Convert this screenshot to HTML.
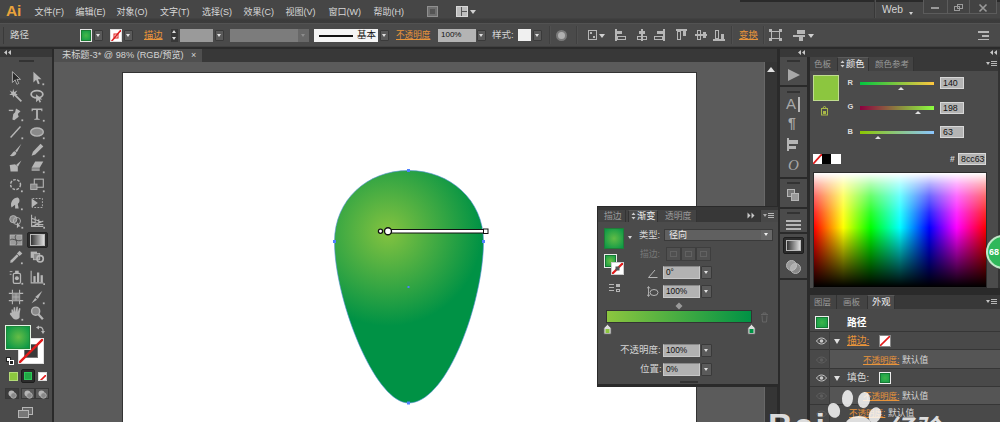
<!DOCTYPE html>
<html><head><meta charset="utf-8">
<style>
*{box-sizing:border-box;margin:0;padding:0}
html,body{width:1000px;height:422px;overflow:hidden;background:#5b5b5b;font-family:"Liberation Sans","Noto Sans CJK SC",sans-serif;font-size:10px;color:#d4d4d4}
.a{position:absolute}
.t{position:absolute;white-space:nowrap;line-height:14px;font-size:10px}
.m{font-size:9px;color:#d8d8d8}
.or{color:#e8943a;text-decoration:underline}
.dk{color:#111}
</style></head><body>
<div class="a" style="left:54px;top:62px;width:712px;height:360px;background:#5b5b5b;"></div>
<div class="a" style="left:122px;top:72px;width:575px;height:351px;background:#fff;border:1px solid #333;border-bottom:0"></div>
<svg class="a" style="left:300px;top:150px" width="220" height="272" viewBox="300 150 220 272">
<defs><radialGradient id="g" gradientUnits="userSpaceOnUse" cx="388" cy="232" r="94">
<stop offset="0" stop-color="#84c340"/><stop offset="1" stop-color="#009245"/></radialGradient></defs>
<path id="egg" d="M408.5,170.5 C367,170.5 334.5,200 334.5,241.5 C334.5,300 375,403 408.5,403 C448,403 483.5,300 483.5,241.5 C483.5,200 450,170.5 408.5,170.5 Z" fill="url(#g)" stroke="#4f8fd8" stroke-width="0.6"/>
<g fill="#4f80ff"><rect x="407" y="169" width="3" height="3"/><rect x="333" y="240" width="3" height="3"/><rect x="482" y="240" width="3" height="3"/><rect x="407" y="401.5" width="3" height="3"/><rect x="407.5" y="286" width="2" height="2"/></g>
<rect x="390" y="229.500" width="94" height="3.500" fill="#fff" stroke="#111" stroke-width="1"/>
<circle cx="380.5" cy="231.200" r="2.100" fill="#fff" stroke="#111" stroke-width="1.300"/>
<circle cx="388" cy="231.200" r="3.500" fill="#fff" stroke="#111" stroke-width="1.400"/>
<rect x="483.500" y="229" width="4.500" height="4.500" fill="#fff" stroke="#111" stroke-width="1"/>
</svg>
<div class="a" style="left:0px;top:0px;width:1000px;height:18px;background:#464646;"></div>
<div class="a" style="left:0;top:18px;width:1000px;height:5px;background:linear-gradient(180deg,#434343,#3b3b3b 40%,#3c3c3c)"></div>
<div class="a" style="left:740px;top:0px;width:260px;height:2px;background:#2a2a2a;"></div>
<div class="t " style="left:6px;top:2.5px;font-size:15.500px;line-height:16px;font-weight:bold;color:#e9a33b;letter-spacing:-0.3px">Ai</div>
<div class="t m" style="left:34.5px;top:5px;">文件(F)</div>
<div class="t m" style="left:75.5px;top:5px;">编辑(E)</div>
<div class="t m" style="left:116.5px;top:5px;">对象(O)</div>
<div class="t m" style="left:160px;top:5px;">文字(T)</div>
<div class="t m" style="left:202px;top:5px;">选择(S)</div>
<div class="t m" style="left:243.5px;top:5px;">效果(C)</div>
<div class="t m" style="left:285.5px;top:5px;">视图(V)</div>
<div class="t m" style="left:328.5px;top:5px;">窗口(W)</div>
<div class="t m" style="left:373.5px;top:5px;">帮助(H)</div>
<div class="a" style="left:427px;top:6px;width:11px;height:11px;background:#6e6e6e;border:1px solid #909090"></div>
<div class="a" style="left:430px;top:9px;width:5px;height:5px;background:#555;"></div>
<div class="a" style="left:456px;top:6px;width:12px;height:11px;background:#bdbdbd;border:1px solid #d8d8d8"></div>
<div class="a" style="left:461px;top:7px;width:1px;height:9px;background:#555;"></div>
<div class="a" style="left:462px;top:11px;width:5px;height:1px;background:#555;"></div>
<div class="a" style="left:470px;top:10px;border:3px solid transparent;border-top:4px solid #d0d0d0;border-bottom:0"></div>
<div class="a" style="left:874px;top:0px;width:1px;height:18px;background:#383838;"></div>
<div class="a" style="left:875px;top:0px;width:1px;height:18px;background:#505050;"></div>
<div class="t " style="left:882px;top:3px;font-size:10.300px">Web</div>
<div class="a" style="left:909px;top:12px;border:2.5px solid transparent;border-top:3px solid #d0d0d0;border-bottom:0"></div>
<div class="a" style="left:923px;top:0px;width:24.5px;height:13.5px;background:#434343;border:1px solid #5c5c5c;border-top:0"></div>
<div class="a" style="left:947px;top:0px;width:22.5px;height:13.5px;background:#434343;border:1px solid #5c5c5c;border-top:0"></div>
<div class="a" style="left:969px;top:0px;width:28px;height:13.5px;background:#434343;border:1px solid #5c5c5c;border-top:0"></div>
<div class="a" style="left:931px;top:7px;width:8px;height:2px;background:#9a9a9a;"></div>
<div class="a" style="left:954px;top:5.5px;width:6px;height:5px;background:transparent;border:1px solid #9a9a9a"></div>
<div class="a" style="left:957px;top:3.5px;width:6px;height:5px;background:transparent;border:1px solid #9a9a9a"></div>
<svg class="a" style="left:978px;top:2.5px;" width="10" height="10" viewBox="0 0 10 10"><path d="M1.500,1.500 L8.500,8.500 M8.500,1.500 L1.500,8.500" stroke="#9a9a9a" stroke-width="1.6"/></svg>
<div class="a" style="left:0px;top:22.5px;width:1000px;height:24px;background:#4a4a4a;border-top:1px solid #525252"></div>
<div class="a" style="left:0px;top:46px;width:1000px;height:1px;background:#404040;"></div>
<div class="a" style="left:0px;top:47px;width:1000px;height:2px;background:#2b2b2b;"></div>
<div class="a" style="left:3px;top:27px;width:1px;height:17px;background:#3a3a3a;"></div>
<div class="t " style="left:10px;top:28px;font-size:9.5px">路径</div>
<div class="a" style="left:80px;top:28.500px;width:12px;height:13px;border:1px solid #e8e8e8;box-shadow:inset 0 0 0 1px #1b7c32;background:radial-gradient(circle,#45b849,#069647)"></div>
<div class="a" style="left:94px;top:29.5px;width:9px;height:11px;background:#5a5a5a;border:1px solid #3a3a3a;border-radius:1px"></div>
<div class="a" style="left:96.0px;top:33.5px;border:2.5px solid transparent;border-top:3px solid #e0e0e0;border-bottom:0"></div>
<div class="a" style="left:110px;top:28.500px;width:12px;height:13px;background:#fff;border:1px solid #ddd;overflow:hidden"><svg width="10" height="12" viewBox="0 0 10 12"><rect x="3" y="4" width="4" height="4" fill="none" stroke="#d22" stroke-width="1"/><path d="M0,12 L10,0" stroke="#d22" stroke-width="1.5"/></svg></div>
<div class="a" style="left:124px;top:29.5px;width:9px;height:11px;background:#5a5a5a;border:1px solid #3a3a3a;border-radius:1px"></div>
<div class="a" style="left:126.0px;top:33.5px;border:2.5px solid transparent;border-top:3px solid #e0e0e0;border-bottom:0"></div>
<div class="t or" style="left:144px;top:28px;font-size:9.300px">描边</div>
<div class="a" style="left:171px;top:28.5px;width:7px;height:13px;background:#383838;"></div>
<div class="a" style="left:172px;top:30px;border:2.5px solid transparent;border-bottom:3px solid #ddd;border-top:0"></div>
<div class="a" style="left:172px;top:37px;border:2.5px solid transparent;border-top:3px solid #ddd;border-bottom:0"></div>
<div class="a" style="left:180px;top:28.5px;width:33px;height:13px;background:#9a9a9a;"></div>
<div class="a" style="left:215px;top:29.5px;width:9px;height:11px;background:#5a5a5a;border:1px solid #3a3a3a;border-radius:1px"></div>
<div class="a" style="left:217.0px;top:33.5px;border:2.5px solid transparent;border-top:3px solid #e0e0e0;border-bottom:0"></div>
<div class="a" style="left:230px;top:28.5px;width:68px;height:13px;background:#7c7c7c;"></div>
<div class="a" style="left:298px;top:28.5px;width:11px;height:13px;background:#686868;"></div>
<div class="a" style="left:301px;top:34px;border:2.5px solid transparent;border-top:3px solid #8c8c8c;border-bottom:0"></div>
<div class="a" style="left:314px;top:28.5px;width:64px;height:13px;background:#f4f4f4;"></div>
<div class="a" style="left:319px;top:35px;width:34px;height:2px;background:#111;"></div>
<div class="t dk" style="left:357px;top:28px;font-size:9.500px">基本</div>
<div class="a" style="left:380px;top:29.5px;width:9px;height:11px;background:#5a5a5a;border:1px solid #3a3a3a;border-radius:1px"></div>
<div class="a" style="left:382.0px;top:33.5px;border:2.5px solid transparent;border-top:3px solid #e0e0e0;border-bottom:0"></div>
<div class="t or" style="left:396px;top:28px;font-size:8.600px">不透明度</div>
<div class="a" style="left:438px;top:28.5px;width:38px;height:13px;background:#b4b4b4;"></div>
<div class="t dk" style="left:441px;top:28px;font-size:8px">100%</div>
<div class="a" style="left:477px;top:29.5px;width:9px;height:11px;background:#5a5a5a;border:1px solid #3a3a3a;border-radius:1px"></div>
<div class="a" style="left:479.0px;top:33.5px;border:2.5px solid transparent;border-top:3px solid #e0e0e0;border-bottom:0"></div>
<div class="t " style="left:492px;top:28px;font-size:9.500px">样式:</div>
<div class="a" style="left:518px;top:29px;width:13px;height:12px;background:#f0f0f0;"></div>
<div class="a" style="left:533px;top:29.5px;width:9px;height:11px;background:#5a5a5a;border:1px solid #3a3a3a;border-radius:1px"></div>
<div class="a" style="left:535.0px;top:33.5px;border:2.5px solid transparent;border-top:3px solid #e0e0e0;border-bottom:0"></div>
<div class="a" style="left:556px;top:30px;width:11px;height:11px;background:#b0b0b0;border-radius:50%;border:2px solid #7a7a7a"></div>
<div class="a" style="left:549px;top:26px;width:1px;height:18px;background:#404040;"></div>
<div class="a" style="left:550px;top:26px;width:1px;height:18px;background:#505050;"></div>
<div class="a" style="left:576px;top:26px;width:1px;height:18px;background:#404040;"></div>
<div class="a" style="left:577px;top:26px;width:1px;height:18px;background:#505050;"></div>
<div class="a" style="left:731px;top:26px;width:1px;height:18px;background:#404040;"></div>
<div class="a" style="left:732px;top:26px;width:1px;height:18px;background:#505050;"></div>
<div class="a" style="left:763px;top:26px;width:1px;height:18px;background:#404040;"></div>
<div class="a" style="left:764px;top:26px;width:1px;height:18px;background:#505050;"></div>
<div class="a" style="left:588px;top:30px;width:9px;height:10px;background:transparent;border:1px solid #b6b6b6"></div>
<div class="a" style="left:590px;top:32px;width:2px;height:2px;background:#b6b6b6;"></div>
<div class="a" style="left:593px;top:36px;width:2px;height:2px;background:#b6b6b6;"></div>
<div class="a" style="left:599px;top:34px;border:3px solid transparent;border-top:4px solid #d0d0d0;border-bottom:0"></div>
<div class="a" style="left:615px;top:29px;width:2px;height:12px;background:#b6b6b6;"></div>
<div class="a" style="left:617px;top:31px;width:5px;height:3px;background:#b6b6b6;"></div>
<div class="a" style="left:617px;top:36px;width:9px;height:4px;background:transparent;border:1px solid #b6b6b6"></div>
<div class="a" style="left:641px;top:29px;width:2px;height:12px;background:#b6b6b6;"></div>
<div class="a" style="left:639px;top:31px;width:6px;height:3px;background:#b6b6b6;"></div>
<div class="a" style="left:637px;top:36px;width:10px;height:4px;background:transparent;border:1px solid #b6b6b6"></div>
<div class="a" style="left:663px;top:29px;width:2px;height:12px;background:#b6b6b6;"></div>
<div class="a" style="left:657px;top:31px;width:6px;height:3px;background:#b6b6b6;"></div>
<div class="a" style="left:654px;top:36px;width:9px;height:4px;background:transparent;border:1px solid #b6b6b6"></div>
<div class="a" style="left:676px;top:29px;width:11px;height:2px;background:#b6b6b6;"></div>
<div class="a" style="left:677px;top:31px;width:4px;height:9px;background:transparent;border:1px solid #b6b6b6"></div>
<div class="a" style="left:683px;top:31px;width:3px;height:5px;background:#b6b6b6;"></div>
<div class="a" style="left:695px;top:34px;width:12px;height:2px;background:#b6b6b6;"></div>
<div class="a" style="left:697px;top:30px;width:4px;height:10px;background:transparent;border:1px solid #b6b6b6"></div>
<div class="a" style="left:703px;top:32px;width:3px;height:6px;background:#b6b6b6;"></div>
<div class="a" style="left:713px;top:39px;width:12px;height:2px;background:#b6b6b6;"></div>
<div class="a" style="left:715px;top:30px;width:4px;height:9px;background:transparent;border:1px solid #b6b6b6"></div>
<div class="a" style="left:721px;top:34px;width:3px;height:5px;background:#b6b6b6;"></div>
<div class="t or" style="left:739px;top:28px;font-size:9.5px">变换</div>
<div class="a" style="left:771px;top:31px;width:9px;height:8px;background:transparent;border:1px solid #b6b6b6"></div>
<div class="a" style="left:769px;top:29px;width:3px;height:3px;background:#b6b6b6;"></div>
<div class="a" style="left:779px;top:29px;width:3px;height:3px;background:#b6b6b6;"></div>
<div class="a" style="left:769px;top:38px;width:3px;height:3px;background:#b6b6b6;"></div>
<div class="a" style="left:779px;top:38px;width:3px;height:3px;background:#b6b6b6;"></div>
<div class="a" style="left:797px;top:30px;width:8px;height:4px;background:#b6b6b6;"></div>
<div class="a" style="left:793px;top:35px;width:12px;height:2px;background:#b6b6b6;"></div>
<div class="a" style="left:799px;top:37px;width:4px;height:4px;background:#b6b6b6;"></div>
<div class="a" style="left:808px;top:34px;border:3px solid transparent;border-top:4px solid #d0d0d0;border-bottom:0"></div>
<div class="a" style="left:978px;top:31px;width:11px;height:2px;background:#b6b6b6;"></div>
<div class="a" style="left:982px;top:35px;width:7px;height:2px;background:#b6b6b6;"></div>
<div class="a" style="left:978px;top:39px;width:11px;height:1px;background:#b6b6b6;"></div>
<div class="a" style="left:976px;top:33px;border:2px solid transparent;border-top:0px solid #c4c4c4;border-bottom:0"></div>
<div class="a" style="left:54px;top:49px;width:725px;height:13px;background:#383838;"></div>
<div class="a" style="left:54px;top:49px;width:148px;height:13px;background:#4f4f4f;"></div>
<div class="t " style="left:62px;top:49px;font-size:9.2px;line-height:13px">未标题-3* @ 98% (RGB/预览)</div>
<div class="t " style="left:191px;top:49px;font-size:9px;line-height:13px">×</div>
<div class="a" style="left:0px;top:49px;width:52px;height:373px;background:#4b4b4b;"></div>
<div class="a" style="left:52px;top:49px;width:2px;height:373px;background:#2a2a2a;"></div>
<div class="a" style="left:0px;top:49px;width:52px;height:8px;background:#383838;"></div>
<svg class="a" style="left:4px;top:50px;" width="7" height="5" viewBox="0 0 7 5"><path d="M3,0 L3,5 L0,2.500 Z M7,0 L7,5 L4,2.500 Z" fill="#c8c8c8"/></svg>
<div class="a" style="left:19px;top:60px;width:15px;height:2px;background:#333;"></div>
<div class="a" style="left:764px;top:62px;width:1px;height:360px;background:#686868;"></div>
<div class="a" style="left:765px;top:62px;width:13px;height:360px;background:#353535;"></div>
<div class="a" style="left:767px;top:67px;border:4px solid transparent;border-bottom:5px solid #e0e0e0;border-top:0"></div>
<div class="a" style="left:777px;top:49px;width:3px;height:373px;background:#2a2a2a;"></div>
<div class="a" style="left:780px;top:49px;width:27px;height:373px;background:#4b4b4b;"></div>
<div class="a" style="left:807px;top:49px;width:3px;height:373px;background:#2a2a2a;"></div>
<div class="a" style="left:780px;top:49px;width:220px;height:8px;background:#383838;"></div>
<div class="a" style="left:810px;top:57px;width:190px;height:365px;background:#4b4b4b;"></div>
<svg class="a" style="left:6.5px;top:68.5px;transform:scale(.9)" width="18" height="18" viewBox="0 0 18 18"><path d="M5,2 L5,14 L8,11 L10,16 L12,15 L10,10.5 L14,10.500 Z" fill="#2a2a2a" stroke="#b6b6b6" stroke-width="1"/></svg>
<svg class="a" style="left:28.0px;top:68.5px;transform:scale(.9)" width="18" height="18" viewBox="0 0 18 18"><path d="M5,2 L5,14 L8,11 L10,16 L12,15 L10,10.5 L14,10.500 Z" fill="#b6b6b6"/><rect x="15" y="15" width="2" height="2" fill="#b6b6b6"/></svg>
<svg class="a" style="left:6.5px;top:86.5px;transform:scale(.9)" width="18" height="18" viewBox="0 0 18 18"><path d="M6,6 L15,15" stroke="#b6b6b6" stroke-width="2"/><path d="M6,1 L7,4.500 L10.500,3 L8.5,6 L11,8 L7.500,8 L6,11 L5,8 L1.500,8 L4,6 L2,3 L5,4.5 Z" fill="#b6b6b6"/></svg>
<svg class="a" style="left:28.0px;top:86.5px;transform:scale(.9)" width="18" height="18" viewBox="0 0 18 18"><ellipse cx="9" cy="7" rx="6.5" ry="4" fill="none" stroke="#b6b6b6" stroke-width="2"/><path d="M8,7 L8,16 L10.500,13.500 L12,16.500 L13.5,15.500 L12,13 L15,13 Z" fill="#b6b6b6"/></svg>
<svg class="a" style="left:6.5px;top:105.0px;transform:scale(.9)" width="18" height="18" viewBox="0 0 18 18"><path d="M1,5 L6,5" stroke="#b6b6b6" stroke-width="1.5"/><path d="M9,3 L14,6 L11,9 L12,12 L7,16 L5,15 L6,9 L8,7 Z" fill="#b6b6b6"/><rect x="15" y="15" width="2" height="2" fill="#b6b6b6"/></svg>
<svg class="a" style="left:28.0px;top:105.0px;transform:scale(.9)" width="18" height="18" viewBox="0 0 18 18"><path d="M3,3 L15,3 L15,6 L14,6 L13.5,4.500 L10,4.500 L10,14 L12,14.500 L12,15.500 L6,15.5 L6,14.500 L8,14 L8,4.500 L4.500,4.5 L4,6 L3,6 Z" fill="#b6b6b6"/><rect x="15.5" y="15.500" width="2" height="2" fill="#b6b6b6"/></svg>
<svg class="a" style="left:6.5px;top:122.5px;transform:scale(.9)" width="18" height="18" viewBox="0 0 18 18"><path d="M3,15 L14,3" stroke="#b6b6b6" stroke-width="1.6"/><rect x="15" y="15" width="2" height="2" fill="#b6b6b6"/></svg>
<svg class="a" style="left:28.0px;top:122.5px;transform:scale(.9)" width="18" height="18" viewBox="0 0 18 18"><ellipse cx="9" cy="9" rx="7" ry="4.500" fill="#8a8a8a" stroke="#b6b6b6" stroke-width="1.5"/><rect x="15.5" y="15" width="2" height="2" fill="#b6b6b6"/></svg>
<svg class="a" style="left:6.5px;top:140.5px;transform:scale(.9)" width="18" height="18" viewBox="0 0 18 18"><path d="M15,2 L8,10 L10,11.500 Z" fill="#b6b6b6"/><path d="M7.500,10.500 C5,11 5,14 2,15.500 C6,16.500 9,15 9.500,12 Z" fill="#b6b6b6"/></svg>
<svg class="a" style="left:28.0px;top:140.5px;transform:scale(.9)" width="18" height="18" viewBox="0 0 18 18"><path d="M13,2 L16,5 L7,14 L3,15.500 L4.500,11 Z" fill="#b6b6b6"/><rect x="15.5" y="15" width="2" height="2" fill="#b6b6b6"/></svg>
<svg class="a" style="left:6.5px;top:157.0px;transform:scale(.9)" width="18" height="18" viewBox="0 0 18 18"><path d="M15,3 L9,8 L11,10 Z" fill="#b6b6b6"/><path d="M2,8 L8,7 L11,10 L11,15 L3,15 Z" fill="#b6b6b6"/></svg>
<svg class="a" style="left:28.0px;top:157.0px;transform:scale(.9)" width="18" height="18" viewBox="0 0 18 18"><path d="M7,4 L16,4 L12,11 L3,11 Z" fill="#b6b6b6"/><path d="M3,11.500 L12,11.500 L12,14.500 L3,14.500 Z" fill="#9a9a9a"/><rect x="15.5" y="15" width="2" height="2" fill="#b6b6b6"/></svg>
<svg class="a" style="left:6.5px;top:176.0px;transform:scale(.9)" width="18" height="18" viewBox="0 0 18 18"><circle cx="8.5" cy="8.500" r="5.5" fill="none" stroke="#b6b6b6" stroke-width="1.6" stroke-dasharray="3 1.5"/><rect x="14.5" y="15" width="2" height="2" fill="#b6b6b6"/></svg>
<svg class="a" style="left:28.0px;top:176.0px;transform:scale(.9)" width="18" height="18" viewBox="0 0 18 18"><rect x="6" y="2.500" width="10" height="9" fill="none" stroke="#b6b6b6" stroke-width="1.2"/><rect x="2" y="8" width="7" height="6" fill="#8a8a8a" stroke="#b6b6b6" stroke-width="1"/><rect x="15.5" y="15" width="2" height="2" fill="#b6b6b6"/></svg>
<svg class="a" style="left:6.5px;top:193.5px;transform:scale(.9)" width="18" height="18" viewBox="0 0 18 18"><path d="M4,14 C2,8 6,3 11,3 C14,5 13,9 11,10 L12,15 L8,15 L8,11 Z" fill="#b6b6b6"/><rect x="14.5" y="15" width="2" height="2" fill="#b6b6b6"/></svg>
<svg class="a" style="left:28.0px;top:193.5px;transform:scale(.9)" width="18" height="18" viewBox="0 0 18 18"><rect x="4" y="4" width="11" height="10" fill="none" stroke="#b6b6b6" stroke-width="1" stroke-dasharray="2 1.500"/><path d="M3,4 L10,9 L3,14 Z" fill="#b6b6b6"/></svg>
<svg class="a" style="left:6.5px;top:212.0px;transform:scale(.9)" width="18" height="18" viewBox="0 0 18 18"><circle cx="6" cy="7" r="4" fill="#8a8a8a" stroke="#b6b6b6"/><circle cx="10" cy="9" r="4" fill="none" stroke="#b6b6b6"/><path d="M10,10 L10,17 L12,15 L14,15 Z" fill="#b6b6b6"/><rect x="15" y="15.500" width="2" height="2" fill="#b6b6b6"/></svg>
<svg class="a" style="left:28.0px;top:212.0px;transform:scale(.9)" width="18" height="18" viewBox="0 0 18 18"><path d="M3,2 L3,15 L16,15 M3,15 L16,9 M7,4 L7,15 M11,7 L11,15 M3,6 L14,10 M3,10 L16,13" fill="none" stroke="#b6b6b6" stroke-width="1.2"/><rect x="16" y="15.500" width="2" height="2" fill="#b6b6b6"/></svg>
<svg class="a" style="left:6.5px;top:231.0px;transform:scale(.9)" width="18" height="18" viewBox="0 0 18 18"><rect x="2.500" y="3.500" width="13" height="11" fill="#9a9a9a" stroke="#b6b6b6"/><path d="M2.500,9 C6,6 11,12 15.500,9 M9,3.500 C6,7 12,11 9,14.5" fill="none" stroke="#444" stroke-width="1"/></svg>
<div class="a" style="left:27px;top:232px;width:21px;height:16px;background:#2c2c2c;border:1px solid #222;border-radius:2px"></div>
<div class="a" style="left:30px;top:234px;width:15px;height:12px;border:1px solid #bbb;background:linear-gradient(90deg,#333,#ddd)"></div>
<svg class="a" style="left:6.5px;top:248.0px;transform:scale(.9)" width="18" height="18" viewBox="0 0 18 18"><path d="M13,2 L16,5 L13,8 L10,5 Z" fill="#b6b6b6"/><path d="M10,6 L12,8 L5,15 L2.500,15.500 L3,13 Z" fill="#b6b6b6"/><rect x="14.5" y="15" width="2" height="2" fill="#b6b6b6"/></svg>
<svg class="a" style="left:28.0px;top:248.0px;transform:scale(.9)" width="18" height="18" viewBox="0 0 18 18"><rect x="2" y="3" width="7" height="7" fill="#b6b6b6"/><rect x="5" y="5" width="7" height="7" fill="#8a8a8a" stroke="#b6b6b6"/><circle cx="12.500" cy="11" r="3.500" fill="none" stroke="#b6b6b6" stroke-width="1.8"/></svg>
<svg class="a" style="left:6.5px;top:268.0px;transform:scale(.9)" width="18" height="18" viewBox="0 0 18 18"><rect x="6" y="5" width="8" height="11" rx="1.500" fill="none" stroke="#b6b6b6" stroke-width="1.4"/><circle cx="10" cy="10.500" r="2.200" fill="#b6b6b6"/><rect x="8" y="2" width="4" height="3" fill="#b6b6b6"/><path d="M2,3 L5,3 M2,6 L4,6" stroke="#b6b6b6"/><rect x="15" y="15.500" width="2" height="2" fill="#b6b6b6"/></svg>
<svg class="a" style="left:28.0px;top:268.0px;transform:scale(.9)" width="18" height="18" viewBox="0 0 18 18"><path d="M2.500,2 L2.500,15.500 L16,15.500" fill="none" stroke="#b6b6b6" stroke-width="1.2"/><rect x="5" y="8" width="2.500" height="7" fill="#b6b6b6"/><rect x="9" y="4" width="2.500" height="11" fill="#b6b6b6"/><rect x="13" y="7" width="2.500" height="8" fill="#b6b6b6"/><rect x="16" y="16" width="2" height="2" fill="#b6b6b6"/></svg>
<svg class="a" style="left:6.5px;top:287.5px;transform:scale(.9)" width="18" height="18" viewBox="0 0 18 18"><path d="M5,1 L5,17 M13,1 L13,17 M1,5 L17,5 M1,13 L17,13" stroke="#b6b6b6" stroke-width="1.2"/><rect x="5" y="5" width="8" height="8" fill="#8a8a8a"/><path d="M5,9 L13,9 M9,5 L9,13" stroke="#b6b6b6" stroke-width="0.8"/></svg>
<svg class="a" style="left:28.0px;top:287.5px;transform:scale(.9)" width="18" height="18" viewBox="0 0 18 18"><path d="M15,2 L7,9 L10,11 Z" fill="#b6b6b6"/><path d="M7,10 L9,12 L3,16 Z" fill="#b6b6b6"/><rect x="15.500" y="15" width="2" height="2" fill="#b6b6b6"/></svg>
<svg class="a" style="left:6.5px;top:303.5px;transform:scale(.9)" width="18" height="18" viewBox="0 0 18 18"><path d="M4,9 L4,5 L5.500,5 L6,8 L6.500,2.500 L8,2.500 L8.500,8 L9.500,2 L11,2 L11,8 L12.500,3.500 L14,4 L13,10 L13,14 C11,17 7,17 5,14 L2,10 L3,8.500 Z" fill="#b6b6b6"/><rect x="15" y="15.500" width="2" height="2" fill="#b6b6b6"/></svg>
<svg class="a" style="left:28.0px;top:303.5px;transform:scale(.9)" width="18" height="18" viewBox="0 0 18 18"><circle cx="7.500" cy="7" r="4.500" fill="#8a8a8a" stroke="#b6b6b6" stroke-width="1.6"/><path d="M10.500,10.500 L15.500,16" stroke="#b6b6b6" stroke-width="2.500"/></svg>
<div class="a" style="left:18px;top:338px;width:26px;height:26px;background:#fff;border:1px solid #e0e0e0;overflow:hidden"><svg width="24" height="24" viewBox="0 0 24 24"><rect x="5.500" y="5.500" width="13" height="13" fill="#3a3a3a" stroke="#777" stroke-width="1"/><path d="M-1,25 L25,-1" stroke="#e21b1b" stroke-width="2.400"/></svg></div>
<div class="a" style="left:5px;top:325px;width:26px;height:25px;border:1px solid #e4f4e4;box-shadow:inset 0 0 0 1px #1d8a3a;background:radial-gradient(circle at 52% 48%,#66bd46 0%,#069647 85%)"></div>
<svg class="a" style="left:36px;top:325px;" width="9" height="9" viewBox="0 0 9 9"><path d="M2,2.500 C6,1 7.500,4 7,7" fill="none" stroke="#b6b6b6" stroke-width="1.3"/><path d="M0,2.500 L3,0.500 L3,4.500 Z M7,9 L5,6 L9,6 Z" fill="#b6b6b6"/></svg>
<div class="a" style="left:6px;top:357px;width:5px;height:5px;background:#fff;border:1px solid #222"></div>
<div class="a" style="left:8.5px;top:359.5px;width:5px;height:5px;background:#222;border:1px solid #fff"></div>
<div class="a" style="left:9px;top:372px;width:9px;height:9px;background:#8cc63f;border:1px solid #b4dc78"></div>
<div class="a" style="left:21px;top:369px;width:14px;height:14px;background:#2b2b2b;border:1px solid #1c1c1c;border-radius:2px"></div>
<div class="a" style="left:24px;top:372px;width:8px;height:8px;background:#22a845;border:1px solid #2fc85a"></div>
<div class="a" style="left:38px;top:372px;width:9px;height:9px;background:#fff;border:1px solid #ddd;overflow:hidden"><svg width="7" height="7"><path d="M0,7 L7,0" stroke="#e21b1b" stroke-width="1.6"/></svg></div>
<div class="a" style="left:5px;top:388px;width:14px;height:11px;background:#3c3c3c;border:1px solid #383838"></div>
<svg class="a" style="left:7px;top:388.5px;" width="10" height="10" viewBox="0 0 10 10"><circle cx="4.500" cy="4.500" r="3" fill="#b6b6b6"/><circle cx="6.500" cy="6.500" r="2.800" fill="#888" stroke="#b6b6b6" stroke-width="0.8"/></svg>
<div class="a" style="left:21px;top:388px;width:14px;height:11px;background:#5a5a5a;border:1px solid #383838"></div>
<svg class="a" style="left:23px;top:388.5px;" width="10" height="10" viewBox="0 0 10 10"><circle cx="4.500" cy="4.500" r="3" fill="#b6b6b6"/><circle cx="6.500" cy="6.500" r="2.800" fill="#888" stroke="#b6b6b6" stroke-width="0.8"/></svg>
<div class="a" style="left:35px;top:388px;width:14px;height:11px;background:#5a5a5a;border:1px solid #383838"></div>
<svg class="a" style="left:37px;top:388.5px;" width="10" height="10" viewBox="0 0 10 10"><circle cx="4.500" cy="4.500" r="3" fill="#b6b6b6"/><circle cx="6.500" cy="6.500" r="2.800" fill="#888" stroke="#b6b6b6" stroke-width="0.8"/></svg>
<div class="a" style="left:22px;top:407px;width:11px;height:8px;background:#666;border:1px solid #b6b6b6"></div>
<div class="a" style="left:18px;top:410px;width:11px;height:8px;background:#777;border:1px solid #b6b6b6"></div>
<div class="a" style="left:780px;top:57px;width:27px;height:28px;background:#4b4b4b;"></div>
<div class="a" style="left:787px;top:60px;width:13px;height:2px;background:#333;"></div>
<svg class="a" style="left:786px;top:68px;" width="16" height="14" viewBox="0 0 16 14"><path d="M2,1 L14,7 L2,13 Z" fill="#a8a8a8"/></svg>
<div class="a" style="left:780px;top:85px;width:27px;height:2px;background:#2a2a2a;"></div>
<div class="a" style="left:787px;top:91px;width:13px;height:2px;background:#333;"></div>
<div class="t " style="left:786px;top:95px;font-size:15px;line-height:18px;color:#a8a8a8">A</div>
<div class="a" style="left:798px;top:97px;width:1.5px;height:15px;background:#b6b6b6;"></div>
<div class="t " style="left:788px;top:114px;font-size:14px;line-height:18px;font-weight:bold;color:#a8a8a8">¶</div>
<div class="a" style="left:787px;top:138px;width:2px;height:13px;background:#b6b6b6;"></div>
<div class="a" style="left:789px;top:140px;width:9px;height:4px;background:#b6b6b6;"></div>
<div class="a" style="left:789px;top:146px;width:7px;height:3px;background:#b6b6b6;"></div>
<div class="t " style="left:788px;top:156px;font-size:15px;line-height:18px;font-style:italic;font-family:'Liberation Serif',serif;color:#a8a8a8">O</div>
<div class="a" style="left:780px;top:177px;width:27px;height:2px;background:#2a2a2a;"></div>
<div class="a" style="left:787px;top:182px;width:13px;height:2px;background:#333;"></div>
<div class="a" style="left:787px;top:189px;width:8px;height:8px;background:#777;border:1px solid #b6b6b6"></div>
<div class="a" style="left:791px;top:193px;width:8px;height:8px;background:#999;border:1px solid #b6b6b6"></div>
<div class="a" style="left:780px;top:207px;width:27px;height:2px;background:#2a2a2a;"></div>
<div class="a" style="left:787px;top:212px;width:13px;height:2px;background:#333;"></div>
<div class="a" style="left:786px;top:220px;width:15px;height:1.5px;background:#b6b6b6;"></div>
<div class="a" style="left:786px;top:224px;width:15px;height:1.5px;background:#b6b6b6;"></div>
<div class="a" style="left:786px;top:228px;width:15px;height:1.5px;background:#b6b6b6;"></div>
<div class="a" style="left:780px;top:232px;width:27px;height:2px;background:#2a2a2a;"></div>
<div class="a" style="left:783px;top:237px;width:21px;height:17px;background:#2c2c2c;border:1px solid #1e1e1e;border-radius:2px"></div>
<div class="a" style="left:786px;top:240px;width:15px;height:11px;border:1px solid #bbb;background:linear-gradient(90deg,#333,#ddd)"></div>
<div class="a" style="left:786px;top:260px;width:11px;height:11px;background:#999;border-radius:50%;border:1px solid #b6b6b6"></div>
<div class="a" style="left:790px;top:263px;width:11px;height:11px;background:rgba(200,200,200,.5);border-radius:50%;border:1px solid #b6b6b6"></div>
<div class="a" style="left:780px;top:278px;width:27px;height:2px;background:#2a2a2a;"></div>
<svg class="a" style="left:798px;top:50px;" width="7" height="5" viewBox="0 0 7 5"><path d="M3,0 L3,5 L0,2.500 Z M7,0 L7,5 L4,2.500 Z" fill="#c8c8c8"/></svg>
<svg class="a" style="left:990px;top:50px;" width="7" height="5" viewBox="0 0 7 5"><path d="M3,0 L3,5 L0,2.500 Z M7,0 L7,5 L4,2.500 Z" fill="#c8c8c8"/></svg>
<div class="a" style="left:810px;top:57px;width:190px;height:14px;background:#383838;"></div>
<div class="a" style="left:810px;top:57px;width:103px;height:14px;background:#434343;"></div>
<div class="t " style="left:814px;top:57px;font-size:8.500px;line-height:14px;color:#9a9a9a">色板</div>
<div class="a" style="left:837px;top:57px;width:32px;height:14px;background:#4b4b4b;border-left:1px solid #333;border-right:1px solid #333;border-top:1px solid #5a5a5a"></div>
<svg class="a" style="left:840px;top:60px;" width="5" height="8" viewBox="0 0 5 8"><path d="M0.500,3 L2.500,0.500 L4.500,3 Z M0.500,5 L2.500,7.500 L4.500,5 Z" fill="#ccc"/></svg>
<div class="t " style="left:846px;top:57px;font-size:9.200px;line-height:14px;color:#eee">颜色</div>
<div class="t " style="left:875px;top:57px;font-size:8.500px;line-height:14px;color:#9a9a9a">颜色参考</div>
<div class="a" style="left:913px;top:57px;width:1px;height:14px;background:#333;"></div>
<div class="a" style="left:986px;top:62px;border:2px solid transparent;border-top:3px solid #c4c4c4;border-bottom:0"></div>
<div class="a" style="left:991px;top:61px;width:6px;height:1px;background:#b6b6b6;"></div>
<div class="a" style="left:991px;top:63px;width:6px;height:1px;background:#b6b6b6;"></div>
<div class="a" style="left:991px;top:65px;width:6px;height:1px;background:#b6b6b6;"></div>
<div class="a" style="left:813px;top:75px;width:26px;height:26px;background:#8cc63f;border:1px solid #c0dc90"></div>
<svg class="a" style="left:820px;top:105px;" width="9" height="11" viewBox="0 0 9 11"><rect x="1.500" y="3.500" width="6" height="6.500" fill="none" stroke="#a8b848" stroke-width="1"/><path d="M2.500,3.500 L4.500,1 L6.500,3.500" fill="none" stroke="#a8b848"/><rect x="3" y="6" width="3" height="3" fill="#a8b848"/></svg>
<div class="t " style="left:847.5px;top:75.5px;font-size:7.500px;line-height:14px;font-weight:bold;color:#ddd">R</div>
<div class="a" style="left:860px;top:81.5px;width:74px;height:3.5px;background:linear-gradient(90deg,#00c63f,#ffc63f);"></div>
<div class="a" style="left:897.5px;top:86.5px;border:3px solid transparent;border-bottom:3.5px solid #e0e0e0;border-top:0"></div>
<div class="a" style="left:940px;top:77px;width:24px;height:12px;background:#b4b4b4;border:1px solid #d8d8d8"></div>
<div class="t dk" style="left:943px;top:76px;font-size:8.8px">140</div>
<div class="t " style="left:847.5px;top:100px;font-size:7.500px;line-height:14px;font-weight:bold;color:#ddd">G</div>
<div class="a" style="left:860px;top:106px;width:74px;height:3.5px;background:linear-gradient(90deg,#8c003f,#8cff3f);"></div>
<div class="a" style="left:914.5px;top:111px;border:3px solid transparent;border-bottom:3.5px solid #e0e0e0;border-top:0"></div>
<div class="a" style="left:940px;top:101.5px;width:24px;height:12px;background:#b4b4b4;border:1px solid #d8d8d8"></div>
<div class="t dk" style="left:943px;top:100.5px;font-size:8.8px">198</div>
<div class="t " style="left:847.5px;top:124.5px;font-size:7.500px;line-height:14px;font-weight:bold;color:#ddd">B</div>
<div class="a" style="left:860px;top:130.5px;width:74px;height:3.5px;background:linear-gradient(90deg,#8cc600,#8cc6ff);"></div>
<div class="a" style="left:875px;top:135.5px;border:3px solid transparent;border-bottom:3.5px solid #e0e0e0;border-top:0"></div>
<div class="a" style="left:940px;top:126px;width:24px;height:12px;background:#b4b4b4;border:1px solid #d8d8d8"></div>
<div class="t dk" style="left:943px;top:125px;font-size:8.8px">63</div>
<div class="a" style="left:813px;top:153.5px;width:9px;height:10px;background:#fff;overflow:hidden"><svg width="9" height="10"><path d="M0,10 L9,0" stroke="#e21b1b" stroke-width="1.8"/></svg></div>
<div class="a" style="left:822px;top:153.5px;width:9px;height:10px;background:#000;"></div>
<div class="a" style="left:831px;top:153.5px;width:9.5px;height:10px;background:#fff;"></div>
<div class="t " style="left:950px;top:152px;font-size:8.5px;font-weight:bold">#</div>
<div class="a" style="left:958px;top:153px;width:28px;height:12px;background:#b4b4b4;border:1px solid #d8d8d8;overflow:hidden"></div>
<div class="a" style="left:958px;top:153px;width:27px;height:12px;overflow:hidden"><div class="t dk" style="left:3px;top:-1px;font-size:8.800px">8cc63f</div></div>
<div class="a" style="left:813px;top:172px;width:174px;height:116px;border:1px solid #2c2c2c;background:linear-gradient(180deg,rgba(255,255,255,1) 0%,rgba(255,255,255,.68) 10%,rgba(255,255,255,.42) 20%,rgba(255,255,255,.16) 35%,rgba(255,255,255,0) 48%,rgba(0,0,0,0) 48%,rgba(0,0,0,1) 100%),linear-gradient(90deg,#f00 0%,#ff0 17%,#0f0 33%,#0ff 50%,#00f 67%,#f0f 83%,#f00 100%)"></div>
<div class="a" style="left:998px;top:57px;width:2px;height:365px;background:#333;"></div>
<div class="a" style="left:986px;top:235px;width:34px;height:34px;border-radius:50%;background:#2fb85a;border:2px solid #bfe8c8"></div>
<div class="t " style="left:989px;top:245px;font-size:9px;font-weight:bold;color:#fff">68</div>
<div class="a" style="left:810px;top:288px;width:190px;height:7px;background:#2a2a2a;"></div>
<div class="a" style="left:810px;top:295px;width:190px;height:14px;background:#383838;"></div>
<div class="a" style="left:810px;top:295px;width:57px;height:14px;background:#434343;"></div>
<div class="t " style="left:814px;top:295px;font-size:8.5px;line-height:14px;color:#9a9a9a">图层</div>
<div class="a" style="left:836px;top:295px;width:1px;height:14px;background:#333;"></div>
<div class="t " style="left:843px;top:295px;font-size:8.500px;line-height:14px;color:#9a9a9a">画板</div>
<div class="a" style="left:867px;top:295px;width:28px;height:14px;background:#4b4b4b;border-left:1px solid #333;border-right:1px solid #333;border-top:1px solid #5a5a5a"></div>
<div class="t " style="left:872px;top:295px;font-size:9.2px;line-height:14px;color:#eee">外观</div>
<div class="a" style="left:986px;top:300px;border:2px solid transparent;border-top:3px solid #c4c4c4;border-bottom:0"></div>
<div class="a" style="left:991px;top:299px;width:6px;height:1px;background:#b6b6b6;"></div>
<div class="a" style="left:991px;top:301px;width:6px;height:1px;background:#b6b6b6;"></div>
<div class="a" style="left:991px;top:303px;width:6px;height:1px;background:#b6b6b6;"></div>
<div class="a" style="left:810px;top:309px;width:190px;height:22px;background:#494949;"></div>
<div class="a" style="left:810px;top:331px;width:190px;height:1px;background:#363636;"></div>
<div class="a" style="left:810px;top:332px;width:190px;height:17px;background:#494949;"></div>
<div class="a" style="left:810px;top:349px;width:190px;height:1px;background:#363636;"></div>
<div class="a" style="left:810px;top:350px;width:190px;height:18px;background:#494949;"></div>
<div class="a" style="left:830px;top:350px;width:170px;height:18px;background:#555;"></div>
<div class="a" style="left:810px;top:368px;width:190px;height:1px;background:#363636;"></div>
<div class="a" style="left:810px;top:369px;width:190px;height:17px;background:#494949;"></div>
<div class="a" style="left:810px;top:386px;width:190px;height:1px;background:#363636;"></div>
<div class="a" style="left:810px;top:387px;width:190px;height:17px;background:#494949;"></div>
<div class="a" style="left:830px;top:387px;width:170px;height:17px;background:#555;"></div>
<div class="a" style="left:810px;top:404px;width:190px;height:1px;background:#363636;"></div>
<div class="a" style="left:810px;top:405px;width:190px;height:17px;background:#494949;"></div>
<div class="a" style="left:810px;top:422px;width:190px;height:1px;background:#363636;"></div>
<div class="a" style="left:829px;top:332px;width:1px;height:90px;background:#3c3c3c;"></div>
<div class="a" style="left:815px;top:316px;width:14px;height:13px;border:1px solid #eee;box-shadow:inset 0 0 0 1px #157a34;background:radial-gradient(circle,#3cb54a,#0f9a48)"></div>
<div class="t " style="left:847px;top:316px;font-weight:bold;color:#fff;font-size:9.800px">路径</div>
<svg class="a" style="left:816px;top:337px;" width="11" height="8" viewBox="0 0 11 8"><path d="M0.500,4 C3,0 8,0 10.500,4 C8,8 3,8 0.5,4 Z" fill="none" stroke="#c8c8c8" stroke-width="1"/><circle cx="5.500" cy="4" r="1.800" fill="#c8c8c8"/></svg>
<div class="a" style="left:834px;top:339px;border:3px solid transparent;border-top:5px solid #e0e0e0;border-bottom:0"></div>
<div class="t or" style="left:847px;top:334px;font-size:9.800px">描边:</div>
<div class="a" style="left:879px;top:335px;width:12px;height:12px;background:#fff;border:1px solid #888;overflow:hidden"><svg width="10" height="10"><path d="M0,10 L10,0" stroke="#e21b1b" stroke-width="1.6"/></svg></div>
<svg class="a" style="left:816px;top:356px;" width="11" height="8" viewBox="0 0 11 8"><path d="M0.500,4 C3,0 8,0 10.500,4 C8,8 3,8 0.5,4 Z" fill="none" stroke="#5e5e5e" stroke-width="1"/><circle cx="5.500" cy="4" r="1.800" fill="#5e5e5e"/></svg>
<div class="t or" style="left:863px;top:353px;font-size:8.500px">不透明度:</div>
<div class="t " style="left:902px;top:353px;font-size:8.8px">默认值</div>
<svg class="a" style="left:816px;top:374px;" width="11" height="8" viewBox="0 0 11 8"><path d="M0.500,4 C3,0 8,0 10.500,4 C8,8 3,8 0.5,4 Z" fill="none" stroke="#c8c8c8" stroke-width="1"/><circle cx="5.500" cy="4" r="1.800" fill="#c8c8c8"/></svg>
<div class="a" style="left:834px;top:376px;border:3px solid transparent;border-top:5px solid #e0e0e0;border-bottom:0"></div>
<div class="t " style="left:847px;top:371px;font-size:9.800px">填色:</div>
<div class="a" style="left:879px;top:372px;width:12px;height:12px;border:1px solid #eee;box-shadow:inset 0 0 0 1px #157a34;background:radial-gradient(circle,#3cb54a,#0f9a48)"></div>
<svg class="a" style="left:816px;top:392px;" width="11" height="8" viewBox="0 0 11 8"><path d="M0.500,4 C3,0 8,0 10.500,4 C8,8 3,8 0.5,4 Z" fill="none" stroke="#5e5e5e" stroke-width="1"/><circle cx="5.500" cy="4" r="1.800" fill="#5e5e5e"/></svg>
<div class="t or" style="left:863px;top:389px;font-size:8.5px">不透明度:</div>
<div class="t " style="left:902px;top:389px;font-size:8.8px">默认值</div>
<svg class="a" style="left:816px;top:410px;" width="11" height="8" viewBox="0 0 11 8"><path d="M0.500,4 C3,0 8,0 10.500,4 C8,8 3,8 0.5,4 Z" fill="none" stroke="#5e5e5e" stroke-width="1"/><circle cx="5.500" cy="4" r="1.800" fill="#5e5e5e"/></svg>
<div class="t or" style="left:849px;top:406px;font-size:8.500px">不透明度:</div>
<div class="t " style="left:888px;top:406px;font-size:8.800px">默认值</div>
<div class="a" style="left:597px;top:206px;width:182px;height:181px;background:#2a2a2a;"></div>
<div class="a" style="left:598px;top:207px;width:180px;height:177px;background:#4b4b4b;"></div>
<div class="a" style="left:598px;top:207px;width:180px;height:3px;background:#383838;"></div>
<div class="a" style="left:598px;top:210px;width:180px;height:12px;background:#434343;"></div>
<div class="t " style="left:604px;top:209px;font-size:8.800px;line-height:14px;color:#9a9a9a">描边</div>
<div class="a" style="left:625px;top:210px;width:1px;height:12px;background:#333;"></div>
<div class="a" style="left:628px;top:210px;width:30px;height:12px;background:#4b4b4b;border-left:1px solid #333;border-right:1px solid #333;border-top:1px solid #5a5a5a"></div>
<svg class="a" style="left:631px;top:212px;" width="5" height="8" viewBox="0 0 5 8"><path d="M0.500,3 L2.500,0.500 L4.500,3 Z M0.500,5 L2.500,7.500 L4.500,5 Z" fill="#ccc"/></svg>
<div class="t " style="left:637px;top:209px;font-size:9.2px;line-height:14px;color:#eee">渐变</div>
<div class="t " style="left:665px;top:209px;font-size:8.800px;line-height:14px;color:#9a9a9a">透明度</div>
<div class="a" style="left:696px;top:210px;width:1px;height:12px;background:#333;"></div>
<div class="a" style="left:697px;top:210px;width:63px;height:12px;background:#373737;"></div>
<svg class="a" style="left:747px;top:212px;" width="8" height="7" viewBox="0 0 8 7"><path d="M0.500,0.500 L3.500,3.500 L0.500,6.500 Z M4.500,0.500 L7.500,3.500 L4.500,6.500 Z" fill="#c8c8c8"/></svg>
<div class="a" style="left:760px;top:210px;width:18px;height:12px;background:#484848;border-left:1px solid #333"></div>
<div class="a" style="left:763px;top:214px;border:2px solid transparent;border-top:3px solid #a8a8a8;border-bottom:0"></div>
<div class="a" style="left:768px;top:213px;width:6px;height:1px;background:#b6b6b6;"></div>
<div class="a" style="left:768px;top:215px;width:6px;height:1px;background:#b6b6b6;"></div>
<div class="a" style="left:768px;top:217px;width:6px;height:1px;background:#b6b6b6;"></div>
<div class="a" style="left:604px;top:228px;width:20px;height:21px;border:1px solid #1f7d38;background:radial-gradient(circle,#62bc46 0%,#069647 100%)"></div>
<div class="a" style="left:628px;top:236px;border:2px solid transparent;border-top:3px solid #d8d8d8;border-bottom:0"></div>
<div class="t " style="left:639px;top:228px;font-size:9.300px">类型:</div>
<div class="a" style="left:664px;top:229px;width:109px;height:12px;background:#606060;border:1px solid #3a3a3a"></div>
<div class="t " style="left:669px;top:228px;font-size:9px;color:#eee">径向</div>
<div class="a" style="left:761px;top:230px;width:11px;height:10px;background:#686868;"></div>
<div class="a" style="left:764px;top:233px;border:2.5px solid transparent;border-top:3px solid #eee;border-bottom:0"></div>
<div class="a" style="left:604px;top:254px;width:13px;height:14px;border:1px solid #e8e8e8;box-shadow:inset 0 0 0 1px #157a34;background:radial-gradient(circle,#6cc044,#069647)"></div>
<div class="a" style="left:611px;top:262px;width:13px;height:13px;background:#fff;border:1px solid #ccc;overflow:hidden"><svg width="11" height="11"><path d="M0,11 L11,0" stroke="#e21b1b" stroke-width="2.200"/><rect x="3.500" y="3.500" width="4" height="4" fill="#555"/></svg></div>
<div class="t " style="left:640px;top:247px;font-size:8.800px;color:#787878">描边:</div>
<div class="a" style="left:666px;top:247px;width:15px;height:14px;background:#505050;border:1px solid #3e3e3e"></div>
<div class="a" style="left:670px;top:251px;width:7px;height:6px;background:transparent;border:1px solid #626262"></div>
<div class="a" style="left:681px;top:247px;width:15px;height:14px;background:#505050;border:1px solid #3e3e3e"></div>
<div class="a" style="left:685px;top:251px;width:7px;height:6px;background:transparent;border:1px solid #626262"></div>
<div class="a" style="left:696px;top:247px;width:15px;height:14px;background:#505050;border:1px solid #3e3e3e"></div>
<div class="a" style="left:700px;top:251px;width:7px;height:6px;background:transparent;border:1px solid #626262"></div>
<svg class="a" style="left:648px;top:269px;" width="10" height="9" viewBox="0 0 10 9"><path d="M0.500,8.500 L9.500,8.500 M0.500,8.500 L7,1" fill="none" stroke="#b6b6b6" stroke-width="1"/></svg>
<div class="a" style="left:663px;top:266px;width:37px;height:13px;background:#b2b2b2;border:1px solid #c8c8c8;border-top-color:#888"></div>
<div class="t dk" style="left:666px;top:265px;font-size:8.300px">0°</div>
<div class="a" style="left:701px;top:266px;width:11px;height:13px;background:#5a5a5a;border:1px solid #3a3a3a;border-radius:1px"></div>
<div class="a" style="left:704.0px;top:271.0px;border:2.5px solid transparent;border-top:3px solid #e0e0e0;border-bottom:0"></div>
<div class="a" style="left:609px;top:284px;width:5px;height:1px;background:#b6b6b6;"></div>
<div class="a" style="left:609px;top:287px;width:5px;height:1px;background:#b6b6b6;"></div>
<div class="a" style="left:609px;top:290px;width:5px;height:1px;background:#b6b6b6;"></div>
<div class="a" style="left:616px;top:284px;width:4px;height:3px;background:#b6b6b6;"></div>
<div class="a" style="left:616px;top:289px;width:4px;height:3px;background:transparent;border:1px solid #b6b6b6"></div>
<svg class="a" style="left:647px;top:286px;" width="12" height="11" viewBox="0 0 12 11"><ellipse cx="7" cy="6.500" rx="4" ry="3" fill="none" stroke="#b6b6b6"/><path d="M1.500,1 L1.500,10 M0,2.500 L1.500,0.500 L3,2.500 M0,8.500 L1.500,10.500 L3,8.500" fill="none" stroke="#b6b6b6" stroke-width="0.9"/></svg>
<div class="a" style="left:663px;top:285px;width:37px;height:13px;background:#b2b2b2;border:1px solid #c8c8c8;border-top-color:#888"></div>
<div class="t dk" style="left:666px;top:284px;font-size:8.300px">100%</div>
<div class="a" style="left:701px;top:285px;width:11px;height:13px;background:#5a5a5a;border:1px solid #3a3a3a;border-radius:1px"></div>
<div class="a" style="left:704.0px;top:290.0px;border:2.5px solid transparent;border-top:3px solid #e0e0e0;border-bottom:0"></div>
<svg class="a" style="left:675px;top:302px;" width="8" height="8" viewBox="0 0 8 8"><path d="M4,0.500 L7.500,4 L4,7.500 L0.500,4 Z" fill="#9a9a9a"/></svg>
<div class="a" style="left:606px;top:310px;width:146px;height:13px;border:1px solid #333;background:linear-gradient(90deg,#8cc63f,#009245)"></div>
<svg class="a" style="left:603px;top:324px;" width="9" height="11" viewBox="0 0 9 11"><path d="M4.500,0.500 L8,4 L8,10 L1,10 L1,4 Z" fill="#ddd" stroke="#666" stroke-width="0.8"/><rect x="2.5" y="5" width="4" height="4" fill="#8cc63f"/></svg>
<svg class="a" style="left:747px;top:324px;" width="9" height="11" viewBox="0 0 9 11"><path d="M4.500,0.500 L8,4 L8,10 L1,10 L1,4 Z" fill="#ddd" stroke="#666" stroke-width="0.8"/><rect x="2.5" y="5" width="4" height="4" fill="#009245"/></svg>
<svg class="a" style="left:760px;top:312px;" width="9" height="11" viewBox="0 0 9 11"><path d="M1,2.500 L8,2.500 M3,2.500 L3,1 L6,1 L6,2.500 M2,3.500 L2.500,10 L6.500,10 L7,3.500" fill="none" stroke="#666" stroke-width="1"/></svg>
<div class="t " style="left:620px;top:343px;font-size:9.500px">不透明度:</div>
<div class="a" style="left:663px;top:344px;width:37px;height:13px;background:#b2b2b2;border:1px solid #c8c8c8;border-top-color:#888"></div>
<div class="t dk" style="left:666px;top:343px;font-size:8.300px">100%</div>
<div class="a" style="left:701px;top:344px;width:11px;height:13px;background:#5a5a5a;border:1px solid #3a3a3a;border-radius:1px"></div>
<div class="a" style="left:704.0px;top:349.0px;border:2.5px solid transparent;border-top:3px solid #e0e0e0;border-bottom:0"></div>
<div class="t " style="left:640px;top:362px;font-size:9.5px">位置:</div>
<div class="a" style="left:663px;top:363px;width:37px;height:13px;background:#b2b2b2;border:1px solid #c8c8c8;border-top-color:#888"></div>
<div class="t dk" style="left:666px;top:362px;font-size:8.300px">0%</div>
<div class="a" style="left:701px;top:363px;width:11px;height:13px;background:#5a5a5a;border:1px solid #3a3a3a;border-radius:1px"></div>
<div class="a" style="left:704.0px;top:368.0px;border:2.5px solid transparent;border-top:3px solid #e0e0e0;border-bottom:0"></div>
<div class="a" style="left:680px;top:381px;width:18px;height:2px;background:#333;"></div>
<div class="a" style="left:842.3px;top:390.0px;width:11.0px;height:17.0px;border-radius:50%;background:rgba(255,255,255,.82);transform:rotate(3deg)"></div>
<div class="a" style="left:857.9000000000001px;top:391.7px;width:11.6px;height:16px;border-radius:50%;background:rgba(255,255,255,.82);transform:rotate(12deg)"></div>
<div class="a" style="left:828.2px;top:402.5px;width:11.6px;height:15.0px;border-radius:50%;background:rgba(255,255,255,.82);transform:rotate(-18deg)"></div>
<div class="a" style="left:868.9000000000001px;top:406.5px;width:11.6px;height:16px;border-radius:50%;background:rgba(255,255,255,.82);transform:rotate(22deg)"></div>
<div class="a" style="left:845px;top:416px;width:27px;height:20px;border-radius:50% 50% 40% 40%;background:rgba(255,255,255,.82)"></div>
<div class="t " style="left:768px;top:407px;font-size:34px;line-height:36px;font-weight:bold;color:rgba(255,255,255,.82);letter-spacing:2px">Bai</div>
<div class="t " style="left:886px;top:415px;font-size:27px;line-height:30px;font-weight:bold;font-style:italic;color:rgba(255,255,255,.82)">经验</div>
</body></html>
